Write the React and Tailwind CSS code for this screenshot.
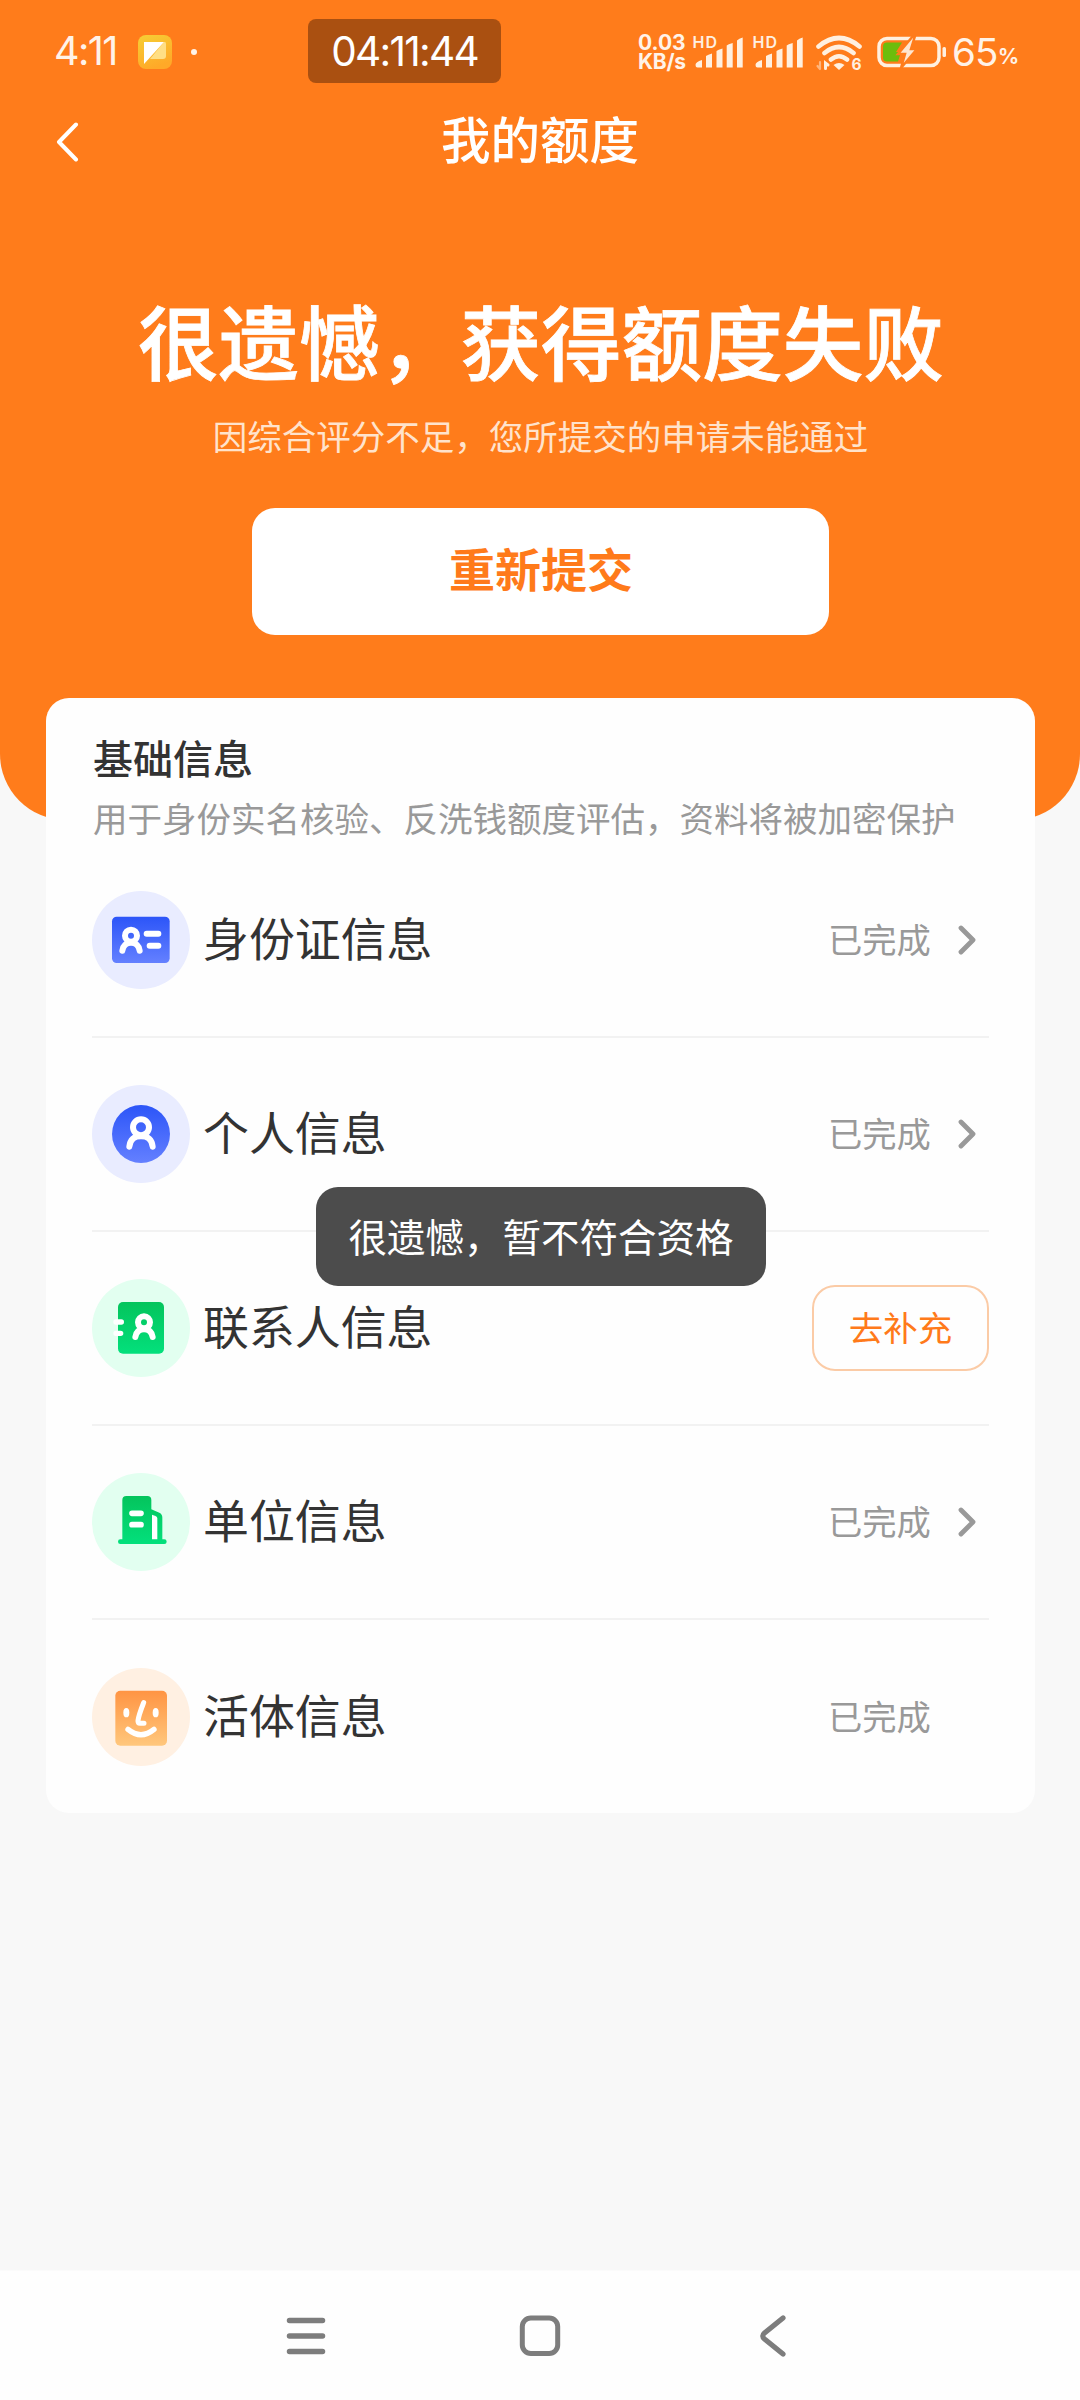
const FONT = "font-['Noto_Sans_CJK_SC',sans-serif]";

function Person({ cx, cy, r, w, spread, drop }) {
  const top = cy + r + 3;
  const foot = top + drop;
  return (
    <g fill="none" stroke="#fff" strokeWidth={w} strokeLinecap="round">
      <circle cx={cx} cy={cy} r={r} />
      <path
        d={`M${cx - spread} ${foot} C${cx - spread + 3} ${top + 6} ${cx - spread / 2} ${top} ${cx} ${top} C${cx + spread / 2} ${top} ${cx + spread - 3} ${top + 6} ${cx + spread} ${foot}`}
      />
    </g>
  );
}

function Badge({ id, bg, from, to, children }) {
  return (
    <svg viewBox="0 0 294 294" className="size-[98px] shrink-0">
      <defs>
        <linearGradient id={id} x1="0" y1="0" x2="0" y2="1">
          <stop offset="0" stopColor={from} />
          <stop offset="1" stopColor={to} />
        </linearGradient>
      </defs>
      <circle cx="147" cy="147" r="147" fill={bg} />
      {children}
    </svg>
  );
}

const IdIcon = () => (
  <Badge id="g-id" bg="#e9ecff" from="#2c55f8" to="#6480ff">
    <rect x="60" y="77" width="173" height="139" rx="14" fill="url(#g-id)" />
    <Person cx={117} cy={134} r={18} w={18} spread={26} drop={24} />
    <path d="M164 128H199M173 164H199" stroke="#fff" strokeWidth="18" strokeLinecap="round" />
  </Badge>
);

const PersonIcon = () => (
  <Badge id="g-person" bg="#e9ecff" from="#2c55f8" to="#6480ff">
    <circle cx="147" cy="147" r="87" fill="url(#g-person)" />
    <Person cx={147} cy={127} r={24} w={18} spread={35} drop={31} />
  </Badge>
);

const ContactIcon = () => (
  <Badge id="g-contact" bg="#e2fff0" from="#04c45c" to="#03e07c">
    <rect x="78" y="69" width="138" height="155" rx="15" fill="url(#g-contact)" />
    <path d="M72 129H88M72 163H86" stroke="#fff" strokeWidth="16" strokeLinecap="round" />
    <Person cx={156} cy={130} r={18} w={18} spread={26} drop={23} />
  </Badge>
);

const CompanyIcon = () => (
  <Badge id="g-company" bg="#e2fff0" from="#04c45c" to="#03e07c">
    <path d="M180 125 L197 135 V200 H180Z" fill="#fff" />
    <path
      d="M85 199H91V81Q91 69 103 69H166Q178 69 178 81V109L202 119Q211 123 211 134V199H217A7 7 0 0 1 217 213H85A7 7 0 0 1 85 199ZM180 125V199H196V136Q196 131 191 129Z"
      fill="url(#g-company)"
    />
    <path d="M120 121H147M120 155H147" stroke="#fff" strokeWidth="17" strokeLinecap="round" />
  </Badge>
);

const FaceIcon = () => (
  <Badge id="g-face" bg="#fff0e2" from="#ff9443" to="#ffc77c">
    <rect x="70" y="68" width="155" height="165" rx="15" fill="url(#g-face)" />
    <ellipse cx="103" cy="134" rx="9" ry="14" fill="#fff" />
    <ellipse cx="191" cy="134" rx="9" ry="14" fill="#fff" />
    <g fill="none" stroke="#fff" strokeLinecap="round" strokeLinejoin="round">
      <path d="M155 104C148 122 140 142 138 158Q137 166 144 166H156" strokeWidth="15" />
      <path d="M108 184Q147 216 186 184" strokeWidth="16" />
    </g>
  </Badge>
);

const rows = [
  { label: '身份证信息', Icon: IdIcon, arrow: true },
  { label: '个人信息', Icon: PersonIcon, arrow: true },
  { label: '联系人信息', Icon: ContactIcon, action: '去补充' },
  { label: '单位信息', Icon: CompanyIcon, arrow: true },
  { label: '活体信息', Icon: FaceIcon },
];

function Row({ label, Icon, arrow, action }) {
  return (
    <li className="flex h-[194px] items-center border-b-2 border-[#f2f2f2] last:border-b-0">
      <Icon />
      <span className="ml-[13px] flex-1 pb-[8px] text-[45.900px] leading-[60px] text-[#333]">{label}</span>
      {action ? (
        <button className="h-[86px] w-[177px] rounded-[23px] border-2 border-[#fbcba6] pb-[5px] text-[34.500px] leading-[50px] text-[#ff7a1a]">
          {action}
        </button>
      ) : (
        <div className="flex w-[161px] items-center">
          <span className="w-[106px] pb-[4px] text-[34.300px] leading-[50px] whitespace-nowrap text-[#999]">已完成</span>
          {arrow && (
            <svg viewBox="0 0 20 32" className="ml-[24px] h-[32px] w-[20px]" fill="none" stroke="#999" strokeWidth="4.8" strokeLinecap="round" strokeLinejoin="round">
              <path d="M3 4L15 16L3 28" />
            </svg>
          )}
        </div>
      )}
    </li>
  );
}

function Signal() {
  return (
    <svg viewBox="-2 -6 54 40" className="-mt-[6px] h-[40px] w-[54px]" fill="#fff0e0">
      <text x="-0.5" y="13" fontSize="16" fontFamily="Inter" fontWeight="600" textLength="24.500">HD</text>
      <path d="M2.500 30Q2.500 27 9 25V32.500H4.500Q2.500 32.500 2.500 30ZM13 21Q15 19.500 19 18.500V32.500H13ZM23.500 16Q25 14.500 29.500 13.500V32.500H23.500ZM33.700 10.500Q35 9 39.700 8V32.500H33.700ZM44 5.500Q46 3.500 49.700 2.500V32.500H44Z" />
    </svg>
  );
}

function StatusBar() {
  return (
    <div className="flex h-[104px] items-center text-[#fff3e8]">
      <span className="ml-[54px] w-[84px] font-['Inter'] text-[39.500px] leading-none tracking-[-1.600px] whitespace-nowrap">4:11</span>
      <svg viewBox="0 0 34 34" className="size-[34px]">
        <defs>
          <linearGradient id="g-note" x1="0" y1="0" x2="0.4" y2="1">
            <stop offset="0" stopColor="#f6cf35" />
            <stop offset="1" stopColor="#ffa928" />
          </linearGradient>
        </defs>
        <rect width="34" height="34" rx="8" fill="url(#g-note)" />
        <path d="M26 7H27Q28 7 28 9V21Q28 24 25 24H12Z" fill="#ffdf85" />
        <path d="M6 7H26L6 29Z" fill="#fff" />
      </svg>
      <span className="ml-[19px] size-[6px] rounded-full bg-[#fff3e8]" />
      <div className="-mt-[2px] ml-[111px] flex h-[64px] w-[193px] items-center justify-center rounded-[8px] bg-[#aa5011]">
        <span className="pt-[2px] font-['Inter'] text-[40.500px] leading-none tracking-[-1.700px] whitespace-nowrap text-white">04:11:44</span>
      </div>
      <div className="ml-[137px] flex w-[49px] flex-col font-['Inter'] text-[21px] leading-[19.500px] font-bold whitespace-nowrap">
        <span>0.03</span>
        <span className="tracking-[-0.300px]">KB/s</span>
      </div>
      <div className="ml-[4px] flex"><Signal /></div>
      <div className="ml-[6px] flex"><Signal /></div>
      <svg viewBox="0 0 52 44" className="-mb-[10px] ml-[10px] h-[44px] w-[52px]" fill="none" stroke="#fff0e0" strokeWidth="4.600" strokeLinecap="round">
        <path d="M3.500 11.500Q24 -5.500 44.500 11.500M9.500 18Q24 6 38.500 18M16 24.500Q24 18 32 24.500" />
        <path d="M18.500 30Q24 26 29.500 30L24 35Z" fill="#fff0e0" stroke="none" />
        <path d="M5 27V34M2.500 31L5 34" strokeWidth="2.200" opacity="0.500" />
        <path d="M10.500 33.500V28L13 30" strokeWidth="3" />
        <text x="36.500" y="35" fontSize="15.500" fontFamily="Inter" fontWeight="700" fill="#fff0e0" stroke="none">6</text>
      </svg>
      <svg viewBox="0 0 70 34" className="ml-[9px] h-[34px] w-[70px]">
        <rect x="3" y="3.500" width="60" height="27" rx="8" fill="none" stroke="#fff0e0" strokeWidth="3.500" />
        <rect x="66.500" y="12" width="3.500" height="10" rx="1.500" fill="#fff0e0" />
        <path d="M11 7.500H26L20 17H25L22 26.500H11Q7 26.500 7 22.500V11.500Q7 7.500 11 7.500Z" fill="#6cbd0c" />
        <path d="M37 1L22 19H29L25 33L41 14H35L39 1Z" fill="#ffe6d0" stroke="#ff7c1b" strokeWidth="2.500" />
      </svg>
      <span className="ml-[6px] font-['Inter'] text-[38.500px] leading-none tracking-[-0.800px]">65</span>
      <span className="mt-[9px] font-['Inter'] text-[21.500px] leading-none font-semibold">%</span>
    </div>
  );
}

function NavBar() {
  return (
    <nav className="mt-auto flex h-[130px] items-center justify-between border-t border-[#fbfbfb] bg-[#fefefe] pr-[291px] pl-[284px]">
      <svg viewBox="0 0 44 44" className="size-[44px]" stroke="#7d7d7d" strokeWidth="5.500" strokeLinecap="round">
        <path d="M5.500 6.500H38.500M5.500 22H38.500M5.500 37.500H38.500" />
      </svg>
      <svg viewBox="0 0 44 44" className="-ml-[2px] size-[44px]" fill="none" stroke="#7d7d7d" strokeWidth="5">
        <rect x="4.300" y="4" width="35.400" height="35.500" rx="8.500" />
      </svg>
      <svg viewBox="0 0 36 44" className="h-[44px] w-[36px]" fill="none" stroke="#7d7d7d" strokeWidth="5.200" strokeLinecap="round">
        <path d="M30 4L11.500 19Q8 22 11.500 25L30 40" />
      </svg>
    </nav>
  );
}

export default function App() {
  return (
    <div className={`relative flex h-[2400px] w-[1080px] flex-col overflow-hidden bg-[#f8f8f8] ${FONT}`}>
      <header className="h-[820px] shrink-0 rounded-b-[66px] bg-[#ff7c1b]">
        <StatusBar />
        <div className="grid h-[76px] grid-cols-[120px_1fr_120px] items-center">
          <svg viewBox="0 0 24 40" className="ml-[55px] h-[40px] w-[24px]" fill="none" stroke="#fff" strokeWidth="4" strokeLinecap="round" strokeLinejoin="round">
            <path d="M21 2.500L4 20L21 37.500" />
          </svg>
          <h1 className="pb-[9px] text-center text-[49.500px] leading-[60px] font-medium text-white">我的额度</h1>
        </div>
        <h2 className="mt-[109px] pl-[2px] text-center text-[80.600px] leading-[100px] font-medium text-white [-webkit-text-stroke:0.8px_#fff]">很遗憾，获得额度失败</h2>
        <p className="mt-[21px] pl-[1px] text-center text-[34.500px] leading-[50px] text-[#ffe3cc]">因综合评分不足，您所提交的申请未能通过</p>
        <button className="mx-auto mt-[48px] block h-[127px] w-[577px] rounded-[23px] bg-white pb-[9px] pl-[2px] text-[46px] leading-[60px] font-bold text-[#ff7a1a]">
          重新提交
        </button>
      </header>

      <main className="mr-[45px] -mt-[122px] ml-[46px] h-[1115px] shrink-0 rounded-[23px] bg-[#fefefe] pt-[34px] pr-[46px] pl-[46px]">
        <h3 className="pl-[1px] text-[40px] leading-[50px] font-medium text-[#333]">基础信息</h3>
        <p className="mt-[10px] pl-[1px] text-[34.500px] leading-[50px] whitespace-nowrap text-[#999]">
          用于身份实名核验、反洗钱额度评估，资料将被加密保护
        </p>
        <ul className="mt-[2px]">
          {rows.map((row) => (
            <Row key={row.label} {...row} />
          ))}
        </ul>
      </main>

      <NavBar />

      <div className="absolute top-[1187px] left-[316px] flex h-[99px] w-[450px] items-center justify-center rounded-[22px] bg-[#4c4c4c] pb-[2px] text-[38.500px] whitespace-nowrap text-white">
        很遗憾，暂不符合资格
      </div>
    </div>
  );
}
